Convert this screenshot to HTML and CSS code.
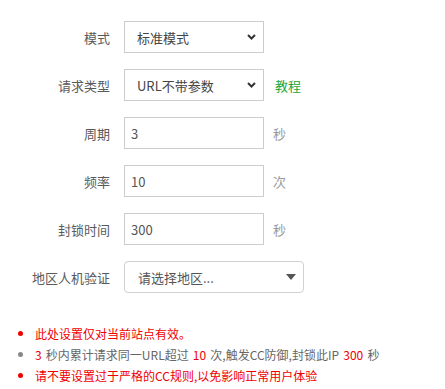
FILE: index.html
```html
<!DOCTYPE html>
<html lang="zh-CN">
<head>
<meta charset="utf-8">
<title>CC防御</title>
<link rel="stylesheet" href="styles.css">
</head>
<body>
<div class="panel">
  <div class="form">
    <div class="row">
      <span class="label">模式</span>
      <div class="select">
        <span>标准模式</span>
        <svg class="chev" width="9" height="6" viewBox="0 0 9 6"><path d="M1 1 L4.5 4.5 L8 1" fill="none" stroke="#333" stroke-width="2"/></svg>
      </div>
    </div>
    <div class="row">
      <span class="label">请求类型</span>
      <div class="select">
        <span>URL不带参数</span>
        <svg class="chev" width="9" height="6" viewBox="0 0 9 6"><path d="M1 1 L4.5 4.5 L8 1" fill="none" stroke="#333" stroke-width="2"/></svg>
      </div>
      <a class="link">教程</a>
    </div>
    <div class="row">
      <span class="label">周期</span>
      <div class="input">3</div>
      <span class="unit">秒</span>
    </div>
    <div class="row">
      <span class="label">频率</span>
      <div class="input">10</div>
      <span class="unit">次</span>
    </div>
    <div class="row">
      <span class="label">封锁时间</span>
      <div class="input">300</div>
      <span class="unit">秒</span>
    </div>
    <div class="row">
      <span class="label">地区人机验证</span>
      <div class="region">
        <span>请选择地区...</span>
        <svg class="tri" width="10" height="6" viewBox="0 0 10 6"><path d="M0 0 L10 0 L5 6 Z" fill="#555"/></svg>
      </div>
    </div>
  </div>
  <ul class="notes">
    <li class="red">此处设置仅对当前站点有效。</li>
    <li class="grey"><em>3</em> 秒内累计请求同一URL超过 <em>10</em> 次,触发CC防御,封锁此IP <em>300</em> 秒</li>
    <li class="red">请不要设置过于严格的CC规则,以免影响正常用户体验</li>
  </ul>
</div>
</body>
</html>
```
FILE: styles.css
```css
* { box-sizing: border-box; }
html, body { margin: 0; padding: 0; background: #fff; }
body {
  font-family: "Segoe UI", "Noto Sans CJK SC", "Noto Sans", sans-serif;
  font-size: 13px;
  color: #555;
}
.panel { padding-top: 21px; }
.form { display: flex; flex-direction: column; gap: 16px; }
.row { display: flex; align-items: center; height: 32px; }
.label {
  width: 124px;
  padding-right: 14px;
  text-align: right;
  color: #5a5a5a;
}
.select, .input, .region {
  height: 32px;
  border: 1px solid #ccc;
  display: flex;
  align-items: center;
  color: #555;
}
.select {
  width: 140px;
  padding: 0 7px 0 12px;
  justify-content: space-between;
  color: #444;
}
.chev { display: block; }
.input { width: 140px; padding: 0 6px; }
.region {
  width: 180px;
  border-radius: 4px;
  border-color: #d0d0d0;
  padding: 0 7px 0 13px;
  justify-content: space-between;
}
.tri { display: block; }
.unit { margin-left: 9px; color: #999; }
.link { margin-left: 11px; color: #20a53a; text-decoration: none; }
.notes {
  list-style: none;
  margin: 30px 0 0 0;
  padding: 0 0 0 18px;
  font-size: 12px;
  line-height: 21px;
}
.notes li { display: flex; align-items: center; }
.notes li::before {
  content: "";
  width: 5px;
  height: 5px;
  border-radius: 50%;
  margin-right: 12px;
  flex: none;
}
.notes li.red { color: #ef0000; }
.notes li.red::before { background: #ef0000; }
.notes li.grey { color: #666; white-space: pre; }
.notes li.grey::before { background: #888; }
.notes em { font-style: normal; color: #ef0000; padding: 0 1.5px; }
.notes em:first-child { padding-left: 0; }
```
